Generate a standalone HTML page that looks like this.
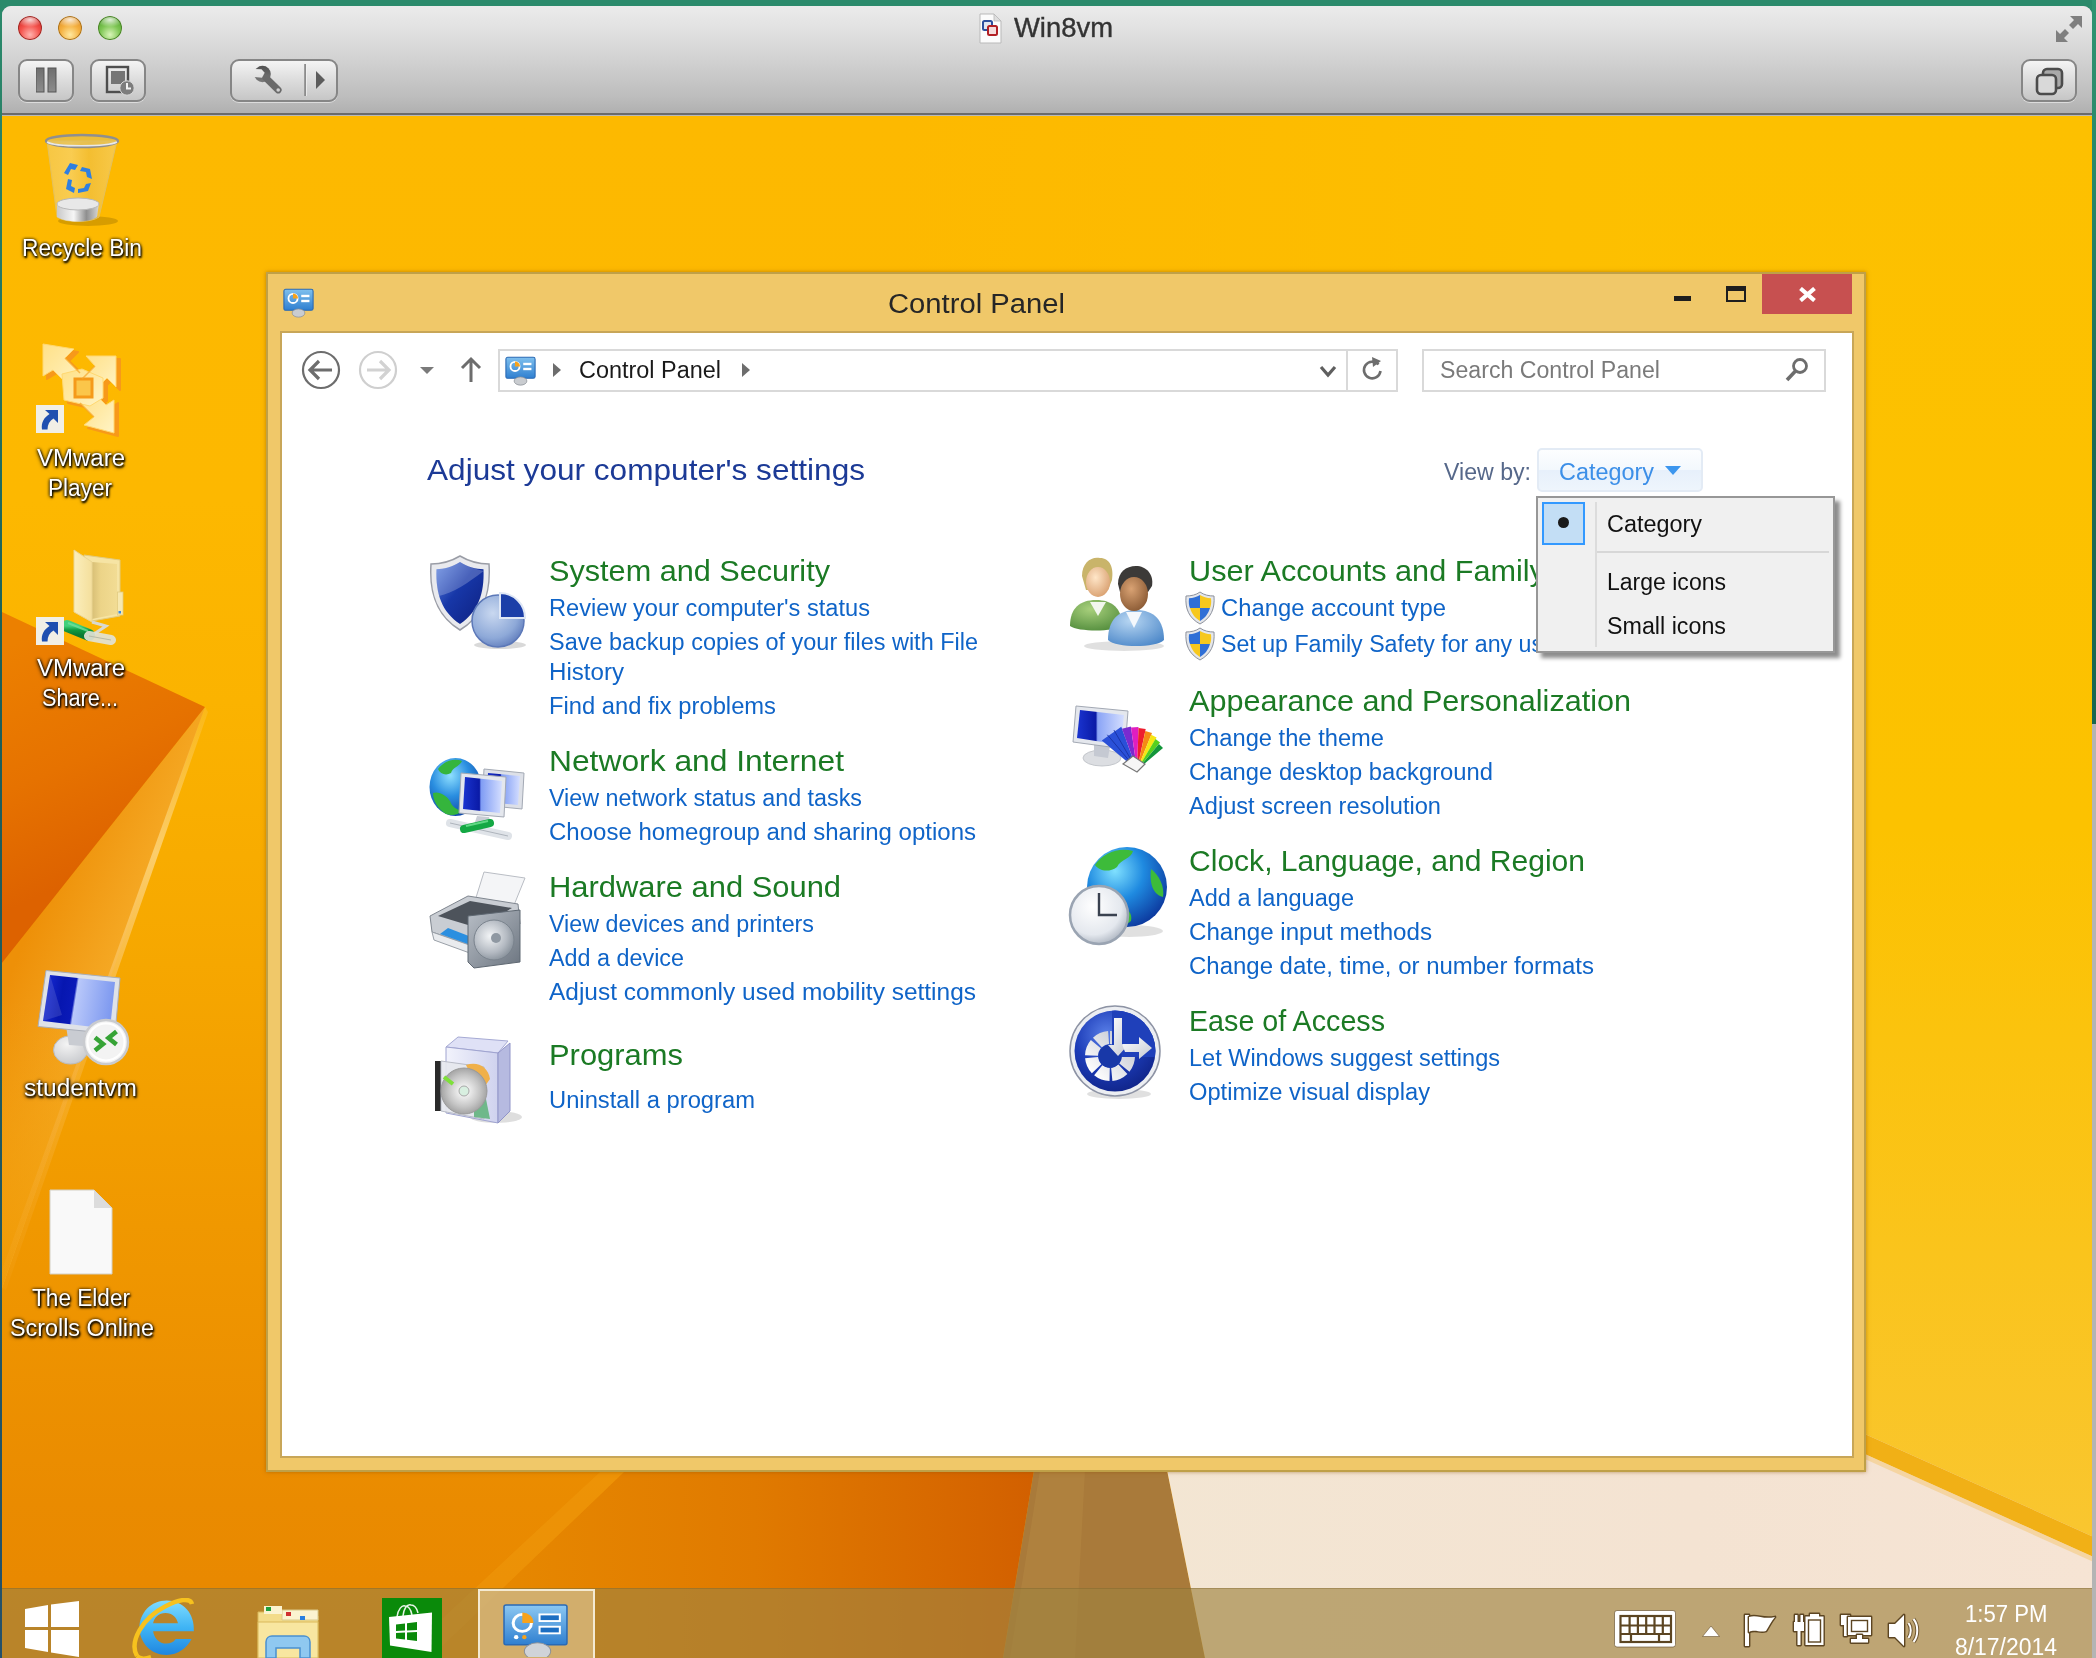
<!DOCTYPE html>
<html lang="en">
<head>
<meta charset="utf-8">
<title>Win8vm</title>
<style>
*{box-sizing:border-box;margin:0;padding:0}
html,body{width:2096px;height:1658px;overflow:hidden}
body{position:relative;background:#2b8a6b;font-family:"Liberation Sans",sans-serif;}
.abs{position:absolute}
.t{position:absolute;white-space:nowrap;transform-origin:0 50%;}
/* mac window */
#mac{position:absolute;left:2px;top:6px;width:2090px;height:1652px;border-radius:9px 9px 0 0;overflow:hidden;background:#b9b9b9}
#macbar{position:absolute;left:0;top:0;width:2090px;height:109px;background:linear-gradient(#ebebeb 0,#e2e2e2 20%,#cfcfcf 55%,#bdbdbd 85%,#b0b0b0 100%);border-bottom:2px solid #6b6b6b}
.tl{position:absolute;top:10px;width:24px;height:24px;border-radius:50%}
.mbtn{position:absolute;top:53px;height:43px;border:2px solid #868686;border-radius:9px;background:linear-gradient(#f4f4f4,#dcdcdc 50%,#c6c6c6);box-shadow:0 1px 0 rgba(255,255,255,.5)}
/* desktop */
#desk{position:absolute;left:0;top:110px;width:2090px;height:1542px;overflow:hidden;background:linear-gradient(#fdb900 0,#fdb800 25%,#fbb300 38%,#f6a700 55%,#f09800 72%,#ea8b00 90%,#e88700 100%)}
#taskbar{position:absolute;left:0;top:1472px;width:2090px;height:70px;background:rgba(159,131,64,.645);border-top:1px solid rgba(120,95,40,.35)}
/* control panel window */
#win{position:absolute;left:264px;top:156px;width:1600px;height:1200px;background:#f0c869;border:2px solid #bfa048;box-shadow:0 0 4px rgba(140,80,0,.55)}
#client{position:absolute;left:12px;top:57px;width:1574px;height:1127px;background:#fff;border:2px solid #c8a658}
#closeb{position:absolute;left:1494px;top:0;width:90px;height:40px;background:#c75050}
.box{position:absolute;border:2px solid #d9d9d9;background:#fff}
#menu{position:absolute;left:1535px;top:381px;width:299px;height:157px;background:#f0f0f0;border:2px solid #979797;box-shadow:5px 5px 4px rgba(0,0,0,.45)}
</style>
</head>
<body>
<!-- strip to the right of mac window -->
<div class="abs" style="left:2092px;top:0;width:4px;height:724px;background:linear-gradient(#2f9472 0,#2a8768 25%,#1f6a55 60%,#1c6650 100%)"></div>
<div class="abs" style="left:2092px;top:724px;width:4px;height:934px;background:#b4b4b4"></div>
<div class="abs" style="left:0;top:0;width:2px;height:1658px;background:linear-gradient(#2b8a6b,#1d5f58 40%,#24506a)"></div>

<div id="mac">
 <div id="macbar">
  <div class="tl" style="left:16px;background:radial-gradient(ellipse 55% 30% at 50% 16%,rgba(255,255,255,.8),rgba(255,255,255,0) 100%),radial-gradient(circle at 50% 78%,#ffb3ae 0,#f4524c 45%,#d8302c 75%,#a81f1c 100%);box-shadow:0 0 0 1px #9c2a25 inset"></div>
  <div class="tl" style="left:56px;background:radial-gradient(ellipse 55% 30% at 50% 16%,rgba(255,255,255,.8),rgba(255,255,255,0) 100%),radial-gradient(circle at 50% 78%,#ffe9a0 0,#f5b03f 45%,#e29428 75%,#b06c12 100%);box-shadow:0 0 0 1px #a8721d inset"></div>
  <div class="tl" style="left:96px;background:radial-gradient(ellipse 55% 30% at 50% 16%,rgba(255,255,255,.8),rgba(255,255,255,0) 100%),radial-gradient(circle at 50% 78%,#d9f5b8 0,#7ec654 45%,#5aa834 75%,#3a7d1e 100%);box-shadow:0 0 0 1px #4a8228 inset"></div>
  <div class="mbtn" style="left:16px;width:56px"><svg class="abs" style="left:16px;top:6px" width="22" height="28" viewBox="0 0 22 28"><defs><linearGradient id="pg" x1="0" y1="0" x2="0" y2="1"><stop offset="0" stop-color="#6e6e6e"/><stop offset="1" stop-color="#8c8c8c"/></linearGradient></defs><rect x="0" y="1" width="8" height="24" fill="url(#pg)" stroke="#555" stroke-width="1"/><rect x="12" y="1" width="8" height="24" fill="url(#pg)" stroke="#555" stroke-width="1"/></svg></div>
  <div class="mbtn" style="left:88px;width:56px"><svg class="abs" style="left:13px;top:4px" width="32" height="32" viewBox="0 0 32 32"><rect x="2" y="2" width="21" height="25" fill="none" stroke="#4e4e4e" stroke-width="2.4"/><rect x="6" y="6" width="14" height="13" fill="#757575"/><circle cx="22" cy="23" r="7.2" fill="#7d7d7d" stroke="#d8d8d8" stroke-width="1"/><path d="M22 18v5.5h4" fill="none" stroke="#f2f2f2" stroke-width="2"/></svg></div>
  <div class="mbtn" style="left:228px;width:108px"><svg class="abs" style="left:0;top:0" width="104" height="39" viewBox="0 0 104 39"><defs><mask id="wm" maskUnits="userSpaceOnUse" x="0" y="0" width="104" height="39"><rect width="104" height="39" fill="#fff"/><polygon points="14,7.600 29.500,8.200 32.700,11.800 30,16.800 14,15.200" fill="#000"/><circle cx="46.200" cy="29" r="1.800" fill="#000"/></mask><linearGradient id="wg" x1="0" y1="0" x2="0" y2="1"><stop offset="0" stop-color="#505050"/><stop offset="1" stop-color="#7c7c7c"/></linearGradient></defs><g mask="url(#wm)"><circle cx="30.500" cy="13" r="8.300" fill="url(#wg)"/><path d="M34 17L46.200 29" stroke="#6a6a6a" stroke-width="6.800" stroke-linecap="round"/></g><rect x="72.200" y="3" width="1.800" height="32" fill="#8c8c8c"/><rect x="74" y="3" width="1" height="32" fill="#f2f2f2" opacity=".7"/><polygon points="84,10 84,28 93,19" fill="#5c5c5c"/></svg></div>
  <div class="mbtn" style="left:2019px;width:56px"><svg class="abs" style="left:12px;top:6px" width="30" height="30" viewBox="0 0 30 30"><rect x="8" y="2" width="19" height="19" rx="4" fill="#a9a9a9" stroke="#4c4c4c" stroke-width="2.6"/><rect x="2" y="8" width="19" height="19" rx="4" fill="#d9d9d9" stroke="#4c4c4c" stroke-width="2.6"/></svg></div>
  <svg class="abs" style="left:2051px;top:7px" width="32" height="32" viewBox="0 0 32 32"><g fill="#7f7f7f"><polygon points="17,3 29,3 29,15 25,11 20,16 16,12 21,7"/><polygon points="15,29 3,29 3,17 7,21 12,16 16,20 11,25"/></g></svg>
  <svg class="abs" style="left:976px;top:7px" width="26" height="32" viewBox="0 0 26 32"><path d="M2 1h14l7 7v22H2z" fill="#fbfbfb" stroke="#b9b9b9" stroke-width="1"/><path d="M16 1v7h7z" fill="#dedede" stroke="#b9b9b9" stroke-width=".8"/><rect x="5" y="8" width="9" height="9" rx="1.5" fill="#dfe6f2" stroke="#2d4f9e" stroke-width="2"/><rect x="10" y="13" width="9" height="9" rx="1.5" fill="#f5dcdc" stroke="#b21f24" stroke-width="2"/></svg>
 </div>
 <div id="desk">
  
<svg class="abs" style="left:0;top:0" width="2090" height="1542" viewBox="2 116 2090 1542">
 <defs>
  <linearGradient id="wy" x1="0" y1="0" x2="1" y2="0"><stop offset="0" stop-color="#fdbd00" stop-opacity="0"/><stop offset=".55" stop-color="#fdbf00" stop-opacity="1"/><stop offset="1" stop-color="#fdc200"/></linearGradient>
  <linearGradient id="wy2" x1="0" y1="0" x2="0" y2="1"><stop offset="0" stop-color="#fdc000"/><stop offset=".5" stop-color="#fcc200"/><stop offset=".8" stop-color="#fac41c"/><stop offset="1" stop-color="#f9c630"/></linearGradient>
  <linearGradient id="wdo" gradientUnits="userSpaceOnUse" x1="20" y1="640" x2="120" y2="860"><stop offset="0" stop-color="#ec8000"/><stop offset=".55" stop-color="#e67200"/><stop offset="1" stop-color="#dd6200"/></linearGradient>
  <linearGradient id="whl" gradientUnits="userSpaceOnUse" x1="40" y1="900" x2="140" y2="940"><stop offset="0" stop-color="#ee9008"/><stop offset="1" stop-color="#f6ac28"/></linearGradient>
  <linearGradient id="whf" x1="0" y1="0" x2="0" y2="1"><stop offset="0" stop-color="#f19b04" stop-opacity="0"/><stop offset=".5" stop-color="#f19b04" stop-opacity="0"/><stop offset="1" stop-color="#f09a04" stop-opacity="1"/></linearGradient>
  <linearGradient id="wray" gradientUnits="userSpaceOnUse" x1="205" y1="707" x2="0" y2="1288"><stop offset="0" stop-color="#fbd070" stop-opacity=".2"/><stop offset=".25" stop-color="#fccf70" stop-opacity=".95"/><stop offset=".6" stop-color="#f9c060" stop-opacity=".4"/><stop offset="1" stop-color="#f6b040" stop-opacity=".1"/></linearGradient>
  <linearGradient id="wbo" gradientUnits="userSpaceOnUse" x1="480" y1="0" x2="1030" y2="0"><stop offset="0" stop-color="#e78900"/><stop offset=".5" stop-color="#e07a00"/><stop offset=".85" stop-color="#d76800"/><stop offset="1" stop-color="#d26000"/></linearGradient>
  <linearGradient id="wcr" x1="0" y1="0" x2="1" y2="0"><stop offset="0" stop-color="#f3e6d3"/><stop offset=".6" stop-color="#f4e3d2"/><stop offset="1" stop-color="#f6e4d4"/></linearGradient>
 </defs>
 <!-- right yellow -->
 <rect x="900" y="116" width="1200" height="1542" fill="url(#wy)"/>
 <!-- left dark orange wedge + highlight ray -->
 <polygon points="205,707 2,1288 2,963" fill="url(#whl)"/>
 <polygon points="205,707 2,1288 2,963" fill="url(#whf)"/>
 <polygon points="205,707 208,712 6,1290 2,1288 2,1270" fill="url(#wray)"/>
 <polygon points="2,612 205,707 2,963" fill="url(#wdo)"/>
 <!-- bottom: darkening orange to the right -->
 <polygon points="1011,1100 1060,1100 1034,1470 1003,1658 430,1658 624,1472" fill="url(#wbo)"/>
 <polygon points="1011,1100 624,1472 430,1658 400,1658 600,1472 990,1100" fill="#f3a010" opacity=".35"/>
 <!-- brown band -->
 <polygon points="1060,1100 1100,1100 1167,1470 1205,1658 1003,1658 1034,1470" fill="#a97a3a"/>
 <polygon points="1040,1470 1085,1470 1075,1658 1010,1658" fill="#b58a45" opacity=".45"/>
 <!-- cream floor -->
 <polygon points="1092,1100 2096,1100 2096,1658 1205,1658 1167,1470" fill="url(#wcr)"/>
 <!-- yellow block on the right -->
 <polygon points="1620,116 2096,116 2096,1538 1867,1435 1620,1324" fill="url(#wy2)"/>
 <polygon points="1620,1324 1867,1435 2096,1538 2096,1558 1867,1455 1620,1344" fill="#f1b016"/>
 <polygon points="1620,1344 1867,1455 2096,1558 2096,1563 1867,1460 1620,1349" fill="#f4c878" opacity=".55"/>
</svg>

  <svg class="abs" style="left:40px;top:17px" width="80" height="96" viewBox="0 0 80 96">
<defs><linearGradient id="rb1" x1="0" y1="0" x2="1" y2="0"><stop offset="0" stop-color="#f1d27a"/><stop offset=".35" stop-color="#f6dc92"/><stop offset=".6" stop-color="#ecc258"/><stop offset="1" stop-color="#f3d687"/></linearGradient>
<linearGradient id="rb2" x1="0" y1="0" x2="1" y2="0"><stop offset="0" stop-color="#c9c9c9"/><stop offset=".4" stop-color="#f6f6f6"/><stop offset=".7" stop-color="#8f8f8f"/><stop offset="1" stop-color="#d8d8d8"/></linearGradient></defs>
<ellipse cx="46" cy="88" rx="30" ry="5" fill="#000" opacity=".15"/>
<path d="M5 8L15 84c8 6 34 6 42 0L75 8z" fill="url(#rb1)" fill-opacity=".55" stroke="#e3c05e" stroke-width="1"/>
<path d="M15 70c8-6 34-6 42 0l-2 14c-8 6-30 6-40 0z" fill="url(#rb2)"/>
<ellipse cx="36" cy="71" rx="21" ry="6" fill="#e8e8e8" stroke="#b8b8b8"/>
<ellipse cx="40" cy="8" rx="36" ry="6" fill="#e0c060" fill-opacity=".6" stroke="#8f8f8f" stroke-width="2.4"/><path d="M5 9c8 5 60 5 70 0" fill="none" stroke="#e9e9e9" stroke-width="1.5"/>
<g fill="#2f7fe0"><path d="M22 40l6-10 8 2-3 5-4-1-3 6z"/><path d="M40 34l8 2 2 10-5-2-1-5-6-1z"/><path d="M26 46l-2 10 8 4 1-5-4-2 1-6z"/><path d="M36 60l10-2 3-8-5 1-2 4-6 1z"/></g>
</svg><svg class="abs" style="left:36px;top:222px" width="92" height="100" viewBox="0 0 92 100">
<defs><linearGradient id="vp1" x1="0" y1="0" x2="1" y2="1"><stop offset="0" stop-color="#ffe188"/><stop offset=".5" stop-color="#ffe9a4"/><stop offset="1" stop-color="#fff4c6"/></linearGradient></defs>
<g fill="#f7991a" stroke="#f7991a" stroke-width="2" stroke-linejoin="round" transform="translate(4,3)"><polygon points="5,6 36,11 27,20 42,35 30,47 15,32 5,38"/><polygon points="78,18 78,49 69,40 56,53 44,41 57,28 48,18"/><polygon points="76,95 46,87 56,79 42,65 54,53 68,67 76,62"/><polygon points="24,36 44,31 65,40 65,60 52,68 26,62"/></g>
<g fill="url(#vp1)" stroke="#ffd870" stroke-width="1" stroke-linejoin="round"><polygon points="5,6 36,11 27,20 42,35 30,47 15,32 5,38"/><polygon points="78,18 78,49 69,40 56,53 44,41 57,28 48,18"/><polygon points="76,95 46,87 56,79 42,65 54,53 68,67 76,62"/><polygon points="24,36 44,31 65,40 65,60 52,68 26,62"/></g>
<rect x="37" y="41" width="17" height="18" fill="#fbc64a" stroke="#f59a1a" stroke-width="3"/>
<path d="M27 20l15 15M57 28L44 41M56 79L42 65" stroke="#f6a52a" stroke-width="1.5" opacity=".7"/>
</svg><svg class="abs" style="left:34px;top:289px" width="28" height="28" viewBox="0 0 28 28"><rect x="0" y="0" width="28" height="28" fill="#f1efe6"/><path d="M9 5h13v13l-4.500-4.500c-4 2.500-6 6-6 11h-5.500c-1-7 2-12 7.500-15.500z" fill="#1f4fb0"/></svg><svg class="abs" style="left:54px;top:432px" width="72" height="100" viewBox="0 0 72 100">
<defs><linearGradient id="vs1" x1="0" y1="0" x2="1" y2="0"><stop offset="0" stop-color="#d8bf76"/><stop offset=".35" stop-color="#ecd488"/><stop offset="1" stop-color="#f2dc94"/></linearGradient>
<linearGradient id="vs2" x1="0" y1="0" x2="1" y2="0"><stop offset="0" stop-color="#fbeebc"/><stop offset="1" stop-color="#f4df9c"/></linearGradient>
<linearGradient id="vs3" x1="0" y1="0" x2="0" y2="1"><stop offset="0" stop-color="#3fd07a"/><stop offset=".45" stop-color="#0f9a40"/><stop offset="1" stop-color="#0a7a32"/></linearGradient></defs>
<polygon points="28,7 64,12 64,68 36,73" fill="#f6e4a4" stroke="#e2cb80"/>
<polygon points="36,14 61,16 61,66 36,71" fill="url(#vs1)"/>
<rect x="61.500" y="44" width="5.500" height="23" fill="#f7e8b0" stroke="#e2cb80" stroke-width=".8"/><rect x="62.500" y="63" width="2.500" height="2.500" fill="#3a8ae0"/>
<polygon points="18,2 36,14 36,74 18,64" fill="url(#vs2)" stroke="#ead594"/>
<path d="M36 74l14 4-12 8" fill="none" stroke="#d9d9d0" stroke-width="3"/>
<path d="M11 78l22 9" stroke="url(#vs3)" stroke-width="12" stroke-linecap="round"/><path d="M12 75l20 8" stroke="#6fe09c" stroke-width="2" opacity=".8"/>
<path d="M33 88l22 4" stroke="#e2e3d6" stroke-width="10" stroke-linecap="round" opacity=".92"/><path d="M33 88l22 4" stroke="#b9bba8" stroke-width="1"/>
</svg><svg class="abs" style="left:34px;top:501px" width="28" height="28" viewBox="0 0 28 28"><rect x="0" y="0" width="28" height="28" fill="#f1efe6"/><path d="M9 5h13v13l-4.500-4.500c-4 2.500-6 6-6 11h-5.500c-1-7 2-12 7.500-15.500z" fill="#1f4fb0"/></svg><svg class="abs" style="left:34px;top:854px" width="96" height="100" viewBox="0 0 96 100">
<defs><linearGradient id="sv1" x1="0" y1="0" x2="1" y2=".12"><stop offset="0" stop-color="#1a2ed8"/><stop offset=".3" stop-color="#0616b0"/><stop offset=".47" stop-color="#0a1ab8"/><stop offset=".5" stop-color="#b9c8fa"/><stop offset="1" stop-color="#7f9af0"/></linearGradient>
<radialGradient id="sv2" cx=".4" cy=".3" r=".8"><stop offset="0" stop-color="#f4f4f4"/><stop offset="1" stop-color="#c4c6ca"/></radialGradient></defs>
<ellipse cx="34.500" cy="80" rx="17" ry="14" fill="url(#sv2)" stroke="#b9bcc2"/>
<polygon points="30,56 50,58 47,76 33,75" fill="#c9ccd2"/>
<polygon points="10,0.500 84,8 79,64 2,56.500" fill="#dfe2e8" stroke="#a9aeb8"/>
<polygon points="14,5 79,12 74,59 7,51" fill="url(#sv1)"/>
<path d="M14 5l12 40-19 6z" fill="#fff" opacity=".12"/>
<circle cx="70" cy="72" r="22" fill="#f3f3f3" stroke="#c9cbcf" stroke-width="2.500"/>
<circle cx="70" cy="72" r="18.500" fill="none" stroke="#fff" stroke-width="2"/>
<g fill="none" stroke="#36a336" stroke-width="4.600"><path d="M59 67.500l8 6.500-8 6.500"/><path d="M80.500 61.500l-8 6.500 8 6.500"/></g>
</svg><svg class="abs" style="left:45px;top:1071px" width="70" height="90" viewBox="0 0 70 90"><path d="M3 3h44l18 18v66H3z" fill="#f9f9f9" stroke="#d4d0c4" stroke-width="1"/><path d="M47 3v18h18z" fill="#dcdcdc"/></svg>
  <div id="win">
   <svg class="abs" style="left:15px;top:14px" width="31" height="30" viewBox="0 0 34 32"><defs><linearGradient id="cps0" x1="0" y1="0" x2="0" y2="1"><stop offset="0" stop-color="#7fc0ee"/><stop offset="1" stop-color="#2f7fd0"/></linearGradient></defs><rect x="1" y="1" width="32" height="23" rx="2" fill="url(#cps0)" stroke="#2a6ab5" stroke-width="1.2"/><circle cx="11" cy="11" r="5" fill="none" stroke="#fff" stroke-width="2"/><path d="M11 11V5.5A5.5 5.5 0 0 1 16.5 11z" fill="#f7a21b"/><rect x="20" y="7" width="9" height="2.6" fill="#fff"/><rect x="20" y="12.5" width="9" height="2.6" fill="#fff"/><ellipse cx="17" cy="27" rx="7" ry="4.5" fill="#c9ccd0" stroke="#8a8f96" stroke-width=".8"/></svg>
   <div id="closeb"><svg class="abs" style="left:37px;top:13px" width="17" height="15" viewBox="0 0 17 15"><path d="M1.5 1.5l14 12M15.5 1.5l-14 12" stroke="#fff" stroke-width="4.2"/></svg></div>
   <div class="abs" style="left:1406px;top:22px;width:17px;height:5px;background:#1e1e1e"></div><div class="abs" style="left:1458px;top:12px;width:20px;height:16px;border:2px solid #1e1e1e;border-top-width:5px"></div>
   <div id="client">
    <svg class="abs" style="left:18px;top:15px" width="190" height="44" viewBox="300 348 190 44"><circle cx="321" cy="370" r="18" fill="#fff" stroke="#6d6d6d" stroke-width="2.2"/><path d="M332 370h-21M319 361l-9 9 9 9" fill="none" stroke="#6d6d6d" stroke-width="3.2"/><circle cx="378" cy="370" r="18" fill="#fff" stroke="#cfcfcf" stroke-width="2.2"/><path d="M367 370h21M380 361l9 9-9 9" fill="none" stroke="#d2d2d2" stroke-width="3.2"/><polygon points="420,367 434,367 427,374" fill="#7a7a7a"/><path d="M471 382v-22M462 368l9-9 9 9" fill="none" stroke="#6d6d6d" stroke-width="3"/></svg><div class="box" style="left:216px;top:16px;width:900px;height:43px"></div><div class="abs" style="left:1064px;top:18px;width:2px;height:39px;background:#d9d9d9"></div><div class="box" style="left:1140px;top:16px;width:404px;height:43px"></div><svg class="abs" style="left:223px;top:23px" width="31" height="30" viewBox="0 0 34 32"><defs><linearGradient id="cps1" x1="0" y1="0" x2="0" y2="1"><stop offset="0" stop-color="#7fc0ee"/><stop offset="1" stop-color="#2f7fd0"/></linearGradient></defs><rect x="1" y="1" width="32" height="23" rx="2" fill="url(#cps1)" stroke="#2a6ab5" stroke-width="1.2"/><circle cx="11" cy="11" r="5" fill="none" stroke="#fff" stroke-width="2"/><path d="M11 11V5.5A5.5 5.5 0 0 1 16.5 11z" fill="#f7a21b"/><rect x="20" y="7" width="9" height="2.6" fill="#fff"/><rect x="20" y="12.5" width="9" height="2.6" fill="#fff"/><ellipse cx="17" cy="27" rx="7" ry="4.5" fill="#c9ccd0" stroke="#8a8f96" stroke-width=".8"/></svg><svg class="abs" style="left:270px;top:29px" width="12" height="16"><polygon points="1,1 1,15 9,8" fill="#6d6d6d"/></svg><svg class="abs" style="left:459px;top:29px" width="12" height="16"><polygon points="1,1 1,15 9,8" fill="#6d6d6d"/></svg><svg class="abs" style="left:1037px;top:32px" width="18" height="14"><path d="M2 2l7 8 7-8" fill="none" stroke="#5f5f5f" stroke-width="3.2"/></svg><svg class="abs" style="left:1078px;top:23px" width="24" height="26" viewBox="0 0 24 26"><path d="M18.5 8.5A8.3 8.3 0 1 0 20.5 15" fill="none" stroke="#6d6d6d" stroke-width="2.6"/><polygon points="12,1 21,5 13,11" fill="#6d6d6d"/></svg><svg class="abs" style="left:1502px;top:24px" width="26" height="26" viewBox="0 0 26 26"><circle cx="16" cy="9" r="6.5" fill="none" stroke="#6d6d6d" stroke-width="2.8"/><path d="M11.5 14L3 23" stroke="#6d6d6d" stroke-width="3.6"/></svg><div class="abs" style="left:1255px;top:115px;width:166px;height:44px;border:2px solid #e3ebf5;border-radius:5px;background:linear-gradient(#fdfeff 0,#f3f8fd 50%,#e7f0fb 51%,#eef5fc 100%)"></div><svg class="abs" style="left:1382px;top:132px" width="18" height="12"><polygon points="1,1 17,1 9,10" fill="#3c96ee"/></svg>
    <svg class="abs" style="left:146px;top:220px" width="100" height="100" viewBox="0 0 100 100">
<defs><linearGradient id="sh1" x1="0" y1="0" x2="1" y2="1"><stop offset="0" stop-color="#5f86e0"/><stop offset=".45" stop-color="#1737a8"/><stop offset="1" stop-color="#0e2080"/></linearGradient>
<radialGradient id="sh2" cx=".4" cy=".35" r=".8"><stop offset="0" stop-color="#c9d8f0"/><stop offset=".6" stop-color="#8ea9d8"/><stop offset="1" stop-color="#4c69b0"/></radialGradient></defs>
<ellipse cx="72" cy="92" rx="26" ry="4" fill="#000" opacity=".15"/>
<path d="M32 3C22 9 12 11 3 11c-2 30 6 52 29 66 23-14 31-36 29-66C52 11 42 9 32 3z" fill="#e9eaee" stroke="#9a9da6" stroke-width="1.5"/>
<path d="M32 9C24 14 16 16 8.5 16.3 7.5 41 14 59 32 71 50 59 56.500 41 55.500 16.300 48 16 40 14 32 9z" fill="url(#sh1)"/>
<path d="M32 9C24 14 16 16 8.500 16.300 8 28 9 36 11 43 25 40 40 30 55.600 18 48 16 40 14 32 9z" fill="#fff" opacity=".22"/>
<circle cx="70" cy="68" r="26" fill="url(#sh2)" stroke="#5c78b8" stroke-width="1.5"/>
<path d="M70 68V43A25 25 0 0 1 95 68z" fill="#1c3fa8" stroke="#dfe7f5" stroke-width="2" transform="translate(2,-3)"/>
</svg><svg class="abs" style="left:146px;top:422px" width="100" height="96" viewBox="0 0 100 96">
<defs><radialGradient id="gl1" cx=".4" cy=".3" r=".8"><stop offset="0" stop-color="#8fe0ff"/><stop offset=".45" stop-color="#2a8ee0"/><stop offset="1" stop-color="#0b3a9a"/></radialGradient>
<linearGradient id="mn1" x1="0" y1="0" x2="1" y2="0"><stop offset="0" stop-color="#1a34d0"/><stop offset=".42" stop-color="#0a1aa6"/><stop offset=".46" stop-color="#7f9cf4"/><stop offset="1" stop-color="#d4deff"/></linearGradient></defs>
<ellipse cx="27.500" cy="32" rx="26" ry="29" fill="url(#gl1)"/>
<path d="M10 14c6-8 16-11 24-8-3 6-9 6-11 12-5 3-11 1-13-4zM5 38c6-2 13 2 17 8 2 6 6 8 12 10-4 4-10 5-16 3C10 54 5 46 5 38z" fill="#35b53c"/>
<g transform="translate(52,14)"><polygon points="4,0 44,4 42,40 2,36" fill="#dde0e7" stroke="#a3a9b4"/><polygon points="8,4 40,7 38,36 6,33" fill="url(#mn1)"/></g>
<g transform="translate(29,18)"><polygon points="4,0 49,4 47,44 2,40" fill="#e4e7ed" stroke="#a3a9b4"/><polygon points="8,4 45,8 43,40 6,36" fill="url(#mn1)"/><polygon points="20,43 32,44 34,50 18,49" fill="#c9cdd5"/></g>
<path d="M22 68l58 13" stroke="#dfe3e8" stroke-width="8" stroke-linecap="round"/><path d="M22 68l58 13" stroke="#aeb4bc" stroke-width="1"/>
<path d="M36 74l26-6" stroke="#14a844" stroke-width="8" stroke-linecap="round"/><path d="M38 71l22-5" stroke="#5fd884" stroke-width="2"/>
</svg><svg class="abs" style="left:146px;top:537px" width="100" height="100" viewBox="0 0 100 100">
<defs><linearGradient id="hw1" x1="0" y1="0" x2="1" y2="1"><stop offset="0" stop-color="#b8bec6"/><stop offset="1" stop-color="#6c7580"/></linearGradient>
<radialGradient id="hw2" cx=".4" cy=".4" r=".7"><stop offset="0" stop-color="#f2f4f6"/><stop offset=".6" stop-color="#b4bac2"/><stop offset="1" stop-color="#7d8791"/></radialGradient></defs>
<polygon points="56,2 97,8 84,40 46,34" fill="#f4f5f7" stroke="#b9bdc4"/>
<polygon points="2,46 40,26 90,34 92,54 50,78 4,62" fill="#c9cdd3" stroke="#7f868f"/>
<polygon points="10,46 42,31 84,38 50,58" fill="#4d535b"/>
<polygon points="4,62 50,78 50,86 6,70" fill="#e9ebee" stroke="#9aa0a8"/>
<polygon points="12,64 40,74 46,68 20,58" fill="#2b8fe0"/>
<polygon points="40,46 92,40 92,92 46,98 40,92" fill="url(#hw1)" stroke="#5f6872"/>
<circle cx="66" cy="70" r="20" fill="url(#hw2)" stroke="#7a838d"/><circle cx="68" cy="68" r="5" fill="#8f98a2"/>
</svg><svg class="abs" style="left:152px;top:700px" width="90" height="96" viewBox="0 0 90 96">
<defs><linearGradient id="pr1" x1="0" y1="0" x2="1" y2="0"><stop offset="0" stop-color="#f2f3fc"/><stop offset="1" stop-color="#cfd2ee"/></linearGradient>
<radialGradient id="pr2" cx=".5" cy=".5" r=".5"><stop offset="0" stop-color="#fff"/><stop offset=".25" stop-color="#ececec"/><stop offset=".7" stop-color="#c4c4c4"/><stop offset="1" stop-color="#a4a4a4"/></radialGradient></defs>
<ellipse cx="62" cy="84" rx="26" ry="6" fill="#000" opacity=".13"/>
<polygon points="24,4 74,8 64,20 12,14" fill="#dfe1f6" stroke="#a6aad4"/>
<polygon points="12,14 64,20 64,90 12,80" fill="url(#pr1)" stroke="#a0a4d0"/>
<polygon points="64,20 76,10 76,78 64,90" fill="#b6bae0" stroke="#9094c8"/>
<polygon points="1,28 7,28 7,78 1,78" fill="#2a2a2a"/>
<polygon points="7,28 50,34 50,86 7,78" fill="#e6e8ee" opacity=".92" stroke="#b3b7c2"/>
<path d="M32 32c12-4 22 2 24 14l-10 14z" fill="#f0b04a"/>
<path d="M40 70l12-4 4 20-16-2z" fill="#6fb88a"/>
<circle cx="30" cy="58" r="23" fill="url(#pr2)" stroke="#9a9a9a"/><circle cx="30" cy="58" r="5" fill="#d8efe0" stroke="#a8a8a8"/>
<path d="M10 44l9 7" stroke="#7ee03a" stroke-width="4"/>
</svg><svg class="abs" style="left:786px;top:223px" width="100" height="96" viewBox="0 0 100 96">
<defs><radialGradient id="us1" cx=".4" cy=".3" r=".8"><stop offset="0" stop-color="#a8d07c"/><stop offset="1" stop-color="#4f8a3a"/></radialGradient>
<radialGradient id="us2" cx=".4" cy=".3" r=".8"><stop offset="0" stop-color="#b7d6f2"/><stop offset="1" stop-color="#4a86c8"/></radialGradient>
<radialGradient id="us3" cx=".4" cy=".35" r=".7"><stop offset="0" stop-color="#ffe6c8"/><stop offset="1" stop-color="#d9a070"/></radialGradient>
<radialGradient id="us4" cx=".4" cy=".35" r=".7"><stop offset="0" stop-color="#d9a273"/><stop offset="1" stop-color="#8a5a34"/></radialGradient></defs>
<ellipse cx="56" cy="90" rx="40" ry="5" fill="#000" opacity=".12"/>
<path d="M2 70c0-18 10-26 26-26s26 8 26 26c-8 6-44 6-52 0z" fill="url(#us1)"/>
<path d="M14 20C14 6 24 0 32 2c10 0 14 10 12 22l-4 10H18z" fill="#c9b46a"/>
<ellipse cx="30" cy="26" rx="12" ry="15" fill="url(#us3)"/>
<path d="M22 46l8 14 8-14z" fill="#f2f6ee"/>
<path d="M40 84c0-20 10-30 28-30s28 10 28 30c-8 8-48 8-56 0z" fill="url(#us2)"/>
<path d="M50 28c0-12 8-18 18-18s18 8 16 20l-4 6H52z" fill="#3c3a38"/>
<ellipse cx="66" cy="38" rx="14" ry="17" fill="url(#us4)"/>
<path d="M58 56l8 16 8-16z" fill="#f4f8fc"/>
</svg><svg class="abs" style="left:788px;top:369px" width="94" height="80" viewBox="0 0 94 80">
<defs><linearGradient id="ap1" x1="0" y1="0" x2="1" y2="0"><stop offset="0" stop-color="#1a34d0"/><stop offset=".4" stop-color="#0a1aa6"/><stop offset=".44" stop-color="#8aa4f6"/><stop offset="1" stop-color="#d4deff"/></linearGradient></defs>
<ellipse cx="32" cy="56" rx="19" ry="8" fill="#dcdee2" stroke="#c4c7cc"/>
<polygon points="24,42 40,44 38,56 24,54" fill="#c5c9d2"/>
<polygon points="6,4 58,9 55,47 3,40" fill="#e4e7ed" stroke="#a3a9b4"/>
<polygon points="10,8 54,13 51,43 7,36" fill="url(#ap1)"/>
<g transform="translate(67,68)"><polygon points="0,0 -35.2,-29.6 -15.7,-43.2" fill="#2a50d8"/><polygon points="0,0 -15.0,-41.3 -6.1,-43.6" fill="#7a2ad0"/><polygon points="0,0 -6.0,-42.6 1.5,-43.0" fill="#e01ec0"/><polygon points="0,0 1.5,-42.0 8.7,-41.1" fill="#ee1e2e"/><polygon points="0,0 8.3,-39.1 15.0,-37.1" fill="#f58a14"/><polygon points="0,0 14.2,-35.2 19.6,-32.6" fill="#f6e614"/><polygon points="0,0 18.5,-30.9 23.1,-27.6" fill="#56d01e"/><polygon points="0,0 21.9,-26.0 26.0,-21.9" fill="#12963a"/><path d="M0 0L-29.6 -35.2M0 0L-23.0 -39.8" stroke="#1a34a8" stroke-width="1"/>
<polygon points="0,2 -14,-6 -4,-14 8,-6" fill="#f6f6f6" stroke="#777" stroke-width="1.2"/>
</g>
</svg><svg class="abs" style="left:785px;top:512px" width="102" height="102" viewBox="0 0 102 102">
<defs><radialGradient id="ck1" cx=".35" cy=".3" r=".8"><stop offset="0" stop-color="#7fe0ff"/><stop offset=".45" stop-color="#1f8ae0"/><stop offset="1" stop-color="#0a2f96"/></radialGradient>
<radialGradient id="ck2" cx=".4" cy=".35" r=".7"><stop offset="0" stop-color="#ffffff"/><stop offset=".7" stop-color="#e4e8ee"/><stop offset="1" stop-color="#aab2be"/></radialGradient></defs>
<ellipse cx="62" cy="86" rx="34" ry="6" fill="#000" opacity=".12"/>
<circle cx="60" cy="42" r="40" fill="url(#ck1)"/>
<path d="M28 20c8-12 24-18 38-14-2 8-12 8-16 16-8 6-18 4-22-2zM84 24c8 6 14 18 12 28-8-2-14-10-12-28zM52 62c8 0 14 6 12 14-4 4-12 6-18 4-2-8 0-14 6-18z" fill="#3dbb3a"/>
<circle cx="32" cy="70" r="29" fill="url(#ck2)" stroke="#9aa4b2" stroke-width="2.5"/>
<path d="M32 48v22h18" fill="none" stroke="#3a4250" stroke-width="2.4"/>
</svg><svg class="abs" style="left:785px;top:671px" width="96" height="96" viewBox="0 0 96 96">
<defs><radialGradient id="ea1" cx=".4" cy=".3" r=".8"><stop offset="0" stop-color="#5a80e8"/><stop offset=".5" stop-color="#1c3cb8"/><stop offset="1" stop-color="#0e2080"/></radialGradient>
<linearGradient id="ea2" x1="0" y1="0" x2="1" y2="1"><stop offset="0" stop-color="#ffffff"/><stop offset="1" stop-color="#c4c8d2"/></linearGradient></defs>
<ellipse cx="52" cy="90" rx="32" ry="5" fill="#000" opacity=".12"/>
<circle cx="48" cy="47" r="45" fill="#eceef2" stroke="#8d93a4" stroke-width="1.5"/>
<circle cx="48" cy="47" r="40.500" fill="url(#ea1)"/>
<circle cx="43" cy="52" r="18.500" fill="none" stroke="url(#ea2)" stroke-width="13" stroke-dasharray="12.300 2.230" transform="rotate(-90 43 52)"/>
<clipPath id="eac"><circle cx="48" cy="47" r="40.500"/></clipPath><path d="M45 4h46v49H45z" fill="#1f40ba" clip-path="url(#eac)"/>
<circle cx="43" cy="52" r="11.500" fill="#1838a8"/>
<path d="M47 14h8v27h6L51 52 41 41h6z" fill="url(#ea2)"/>
<path d="M55 40h17v-7l13 11-13 11v-7H58z" fill="url(#ea2)"/>
</svg><svg class="abs" style="left:903px;top:258px" width="30" height="34" viewBox="0 0 30 34"><path d="M15 1C11 4 6 5 1 5c-1 13 3 22 14 28C26 27 30 18 29 5 24 5 19 4 15 1z" fill="#e4e6ea" stroke="#8c919c"/><path d="M15 4C12 6 8 7 4 7.300 3.500 12 4 15 5 17H15z" fill="#2f6fd6"/><path d="M15 4c3 2 7 3 11 3.300C26.500 12 26 15 25 17H15z" fill="#f7c81e"/><path d="M5 17c2 6 5 10 10 13V17z" fill="#f7c81e"/><path d="M25 17c-2 6-5 10-10 13V17z" fill="#2f6fd6"/></svg><svg class="abs" style="left:903px;top:294px" width="30" height="34" viewBox="0 0 30 34"><path d="M15 1C11 4 6 5 1 5c-1 13 3 22 14 28C26 27 30 18 29 5 24 5 19 4 15 1z" fill="#e4e6ea" stroke="#8c919c"/><path d="M15 4C12 6 8 7 4 7.300 3.500 12 4 15 5 17H15z" fill="#2f6fd6"/><path d="M15 4c3 2 7 3 11 3.300C26.500 12 26 15 25 17H15z" fill="#f7c81e"/><path d="M5 17c2 6 5 10 10 13V17z" fill="#f7c81e"/><path d="M25 17c-2 6-5 10-10 13V17z" fill="#2f6fd6"/></svg>
   </div>
  </div>
  <div id="taskbar"><svg class="abs" style="left:23px;top:12px" width="54" height="56" viewBox="0 0 54 56"><g fill="#fff"><polygon points="0,8 23,4 23,26 0,26"/><polygon points="26,3.5 54,0 54,26 26,26"/><polygon points="0,29 23,29 23,51 0,47"/><polygon points="26,29 54,29 54,56 26,51.500"/></g></svg><svg class="abs" style="left:130px;top:9px" width="66" height="62" viewBox="0 0 66 62">
<defs><linearGradient id="ie1" x1="0" y1="0" x2="0" y2="1"><stop offset="0" stop-color="#7fdcff"/><stop offset=".5" stop-color="#3fb4f4"/><stop offset="1" stop-color="#1f86e0"/></linearGradient></defs>
<path transform="translate(-3.800,-6.600) scale(1.131,1.135)" d="M34 8C20 8 10 19 10 32s10 24 24 24c10 0 18-6 22-14H42c-2 3-5 4-8 4-7 0-11-5-12-11h36c1-15-9-27-24-27zm-12 20c1-5 5-9 11-9s10 4 11 9z" fill="url(#ie1)"/>
<path d="M5 58C-3 44 10 20 34 8 46 2 58 -1 60 6" fill="none" stroke="#f7c21e" stroke-width="4.500"/>
<path d="M5 58c3 3 8 3 14 1" fill="none" stroke="#f7c21e" stroke-width="4"/>
</svg><svg class="abs" style="left:254px;top:13px" width="64" height="56" viewBox="0 0 64 56">
<path d="M2 10h22l4 4h34v42H2z" fill="#f3dc8a" stroke="#d9b85a"/>
<path d="M26 8h36v10H26z" fill="#fbf3d0" stroke="#d9c98a"/><rect x="8" y="4" width="18" height="8" fill="#fbf3d0"/>
<rect x="10" y="5" width="5" height="4" fill="#20a040"/><rect x="30" y="10" width="5" height="4" fill="#d03030"/><rect x="44" y="14" width="5" height="4" fill="#2a7fe0"/>
<path d="M2 20h60v36H2z" fill="#f8e6a0" stroke="#d9b85a"/>
<path d="M10 56V40c0-4 3-6 6-6h32c3 0 6 2 6 6v16h-10V46H20v10z" fill="#8fc8f0" stroke="#4a90d0" stroke-width="1.5"/>
</svg><svg class="abs" style="left:380px;top:9px" width="60" height="60" viewBox="0 0 60 60"><rect width="60" height="60" fill="#0a8a0a"/><g fill="none" stroke="#e9f5e9" stroke-width="1.500"><path d="M15 19c1-8 5-12 8-11 4 0 6 4 7 9"/><path d="M21 18c1-8 4-12 8-11 4 0 6 4 7 8"/></g><polygon points="7,19 50,14.500 49.500,54 8,47.500" fill="#fff"/><g fill="#0a8a0a"><polygon points="14,26.500 23,25.500 23,32.500 14,33"/><polygon points="25,25.200 35,24 35,32 25,32.400"/><polygon points="14,35 23,34.600 23,41.500 14,40.500"/><polygon points="25,34.500 35,34 35,43 25,41.800"/></g></svg><div class="abs" style="left:476px;top:0px;width:117px;height:70px;background:rgba(226,200,150,.62);border:2px solid #f4ead2;border-bottom:none"></div><svg class="abs" style="left:501px;top:15px" width="67" height="53" viewBox="0 0 66 56" preserveAspectRatio="none">
<defs><linearGradient id="cpb" x1="0" y1="0" x2="0" y2="1"><stop offset="0" stop-color="#8cc8f2"/><stop offset="1" stop-color="#2f7fd0"/></linearGradient></defs>
<rect x="1" y="1" width="62" height="42" rx="2" fill="url(#cpb)" stroke="#2a6ab5" stroke-width="1.5"/>
<circle cx="19" cy="20" r="9" fill="none" stroke="#fff" stroke-width="3"/><path d="M19 20V9A11 11 0 0 1 30 20z" fill="#f7a21b"/>
<rect x="36" y="11" width="20" height="7" fill="#1c6ec2" stroke="#fff" stroke-width="2"/><rect x="36" y="24" width="20" height="7" fill="#1c6ec2" stroke="#fff" stroke-width="2"/>
<circle cx="13" cy="35" r="2.2" fill="#fff"/><circle cx="21" cy="35" r="2.2" fill="#f7a21b"/>
<ellipse cx="34" cy="50" rx="13" ry="9" fill="#d0d3d8" stroke="#8a8f96"/>
</svg><svg class="abs" style="left:1608px;top:17px" width="320" height="44" viewBox="1610 1606 320 44">
<rect x="1614.500" y="1610.500" width="61" height="36.500" rx="2.500" fill="#fff" stroke="#5c4522" stroke-width="1" stroke-opacity=".6"/>
<g fill="none" stroke="#5c4522" stroke-width="2.200"><rect x="1620.500" y="1616" width="50.500" height="26"/><path d="M1620 1625.500h51M1620 1634h51M1629.6 1616v18M1637.9 1616v18M1646.2 1616v18M1654.5 1616v18M1662.8 1616v18M1631 1634v8M1659 1634v8"/></g>
<polygon points="1702.500,1636.500 1719.500,1636.500 1711,1626" fill="#fff" stroke="#5c4522" stroke-width="1" stroke-opacity=".55"/>
<g fill="#fff" stroke="#5c4522" stroke-width="2.800" stroke-linejoin="round" paint-order="stroke">
<rect x="1745" y="1615" width="4" height="31"/><path d="M1749 1617c8-3 14 3 26 0-4 5-6 9-9 14-6 2-11-2-17 1z"/>
<path d="M1795 1615h2.500v7h3v-7h2.500v7h1v9h-3.500v14h-3v-14h-3.500v-9h1z"/>
<path d="M1810 1614h9v2.500h4.500v28.500h-18v-28.500h4.500z"/>
<path d="M1841 1615h9v10h-3v11h-3v-11h-3z"/><path d="M1848 1617h23v18h-23z"/><path d="M1857 1635h5v4h6v3.500h-17v-3.500h6z"/>
<path d="M1889 1624h6l9-9v31l-9-9h-6z"/>
</g>
<rect x="1808.500" y="1620" width="12" height="22" fill="#fff" stroke="#5c4522" stroke-width="1.400"/>
<rect x="1851.500" y="1620.500" width="16" height="11" fill="#fff" stroke="#5c4522" stroke-width="1.400"/>
<g fill="none" stroke="#5c4522" stroke-width="4" stroke-opacity=".8"><path d="M1908.500 1623c3 4 3 11 0 15M1913.500 1619c5 6 5 17 0 23"/></g>
<g fill="none" stroke="#fff" stroke-width="2"><path d="M1908.500 1623c3 4 3 11 0 15M1913.500 1619c5 6 5 17 0 23"/></g>
</svg></div>
 </div>
</div>
<div class="t" style="left:1014px;top:15.1px;font-size:27px;line-height:27px;color:#333;transform:scaleX(1.0152);text-shadow:0 1px 0 rgba(255,255,255,.6);-webkit-text-stroke:.4px #333">Win8vm</div>
<div class="t" style="left:22px;top:236.5px;font-size:23px;line-height:23px;color:#fff;transform:scaleX(0.9882);text-shadow:1px 2px 2px rgba(0,0,0,.95),0 0 3px rgba(0,0,0,.9),0 1px 4px rgba(0,0,0,.8)">Recycle Bin</div>
<div class="t" style="left:37px;top:446.5px;font-size:23px;line-height:23px;color:#fff;transform:scaleX(1.0432);text-shadow:1px 2px 2px rgba(0,0,0,.95),0 0 3px rgba(0,0,0,.9),0 1px 4px rgba(0,0,0,.8)">VMware</div>
<div class="t" style="left:48px;top:476.5px;font-size:23px;line-height:23px;color:#fff;transform:scaleX(0.9815);text-shadow:1px 2px 2px rgba(0,0,0,.95),0 0 3px rgba(0,0,0,.9),0 1px 4px rgba(0,0,0,.8)">Player</div>
<div class="t" style="left:37px;top:656.5px;font-size:23px;line-height:23px;color:#fff;transform:scaleX(1.0432);text-shadow:1px 2px 2px rgba(0,0,0,.95),0 0 3px rgba(0,0,0,.9),0 1px 4px rgba(0,0,0,.8)">VMware</div>
<div class="t" style="left:42px;top:686.5px;font-size:23px;line-height:23px;color:#fff;transform:scaleX(0.9435);text-shadow:1px 2px 2px rgba(0,0,0,.95),0 0 3px rgba(0,0,0,.9),0 1px 4px rgba(0,0,0,.8)">Share...</div>
<div class="t" style="left:24px;top:1076.5px;font-size:23px;line-height:23px;color:#fff;transform:scaleX(1.0649);text-shadow:1px 2px 2px rgba(0,0,0,.95),0 0 3px rgba(0,0,0,.9),0 1px 4px rgba(0,0,0,.8)">studentvm</div>
<div class="t" style="left:32px;top:1286.5px;font-size:23px;line-height:23px;color:#fff;transform:scaleX(0.9828);text-shadow:1px 2px 2px rgba(0,0,0,.95),0 0 3px rgba(0,0,0,.9),0 1px 4px rgba(0,0,0,.8)">The Elder</div>
<div class="t" style="left:10px;top:1316.5px;font-size:23px;line-height:23px;color:#fff;transform:scaleX(1.0149);text-shadow:1px 2px 2px rgba(0,0,0,.95),0 0 3px rgba(0,0,0,.9),0 1px 4px rgba(0,0,0,.8)">Scrolls Online</div>
<div class="t" style="left:888px;top:291.1px;font-size:27px;line-height:27px;color:#262626;transform:scaleX(1.0818);">Control Panel</div>
<div class="t" style="left:579px;top:358.5px;font-size:23px;line-height:23px;color:#1a1a1a;transform:scaleX(1.0189);">Control Panel</div>
<div class="t" style="left:1440px;top:358.5px;font-size:23px;line-height:23px;color:#7a7a7a;transform:scaleX(1.0063);">Search Control Panel</div>
<div class="t" style="left:427px;top:454.6px;font-size:30px;line-height:30px;color:#1c3a96;transform:scaleX(1.0531);">Adjust your computer's settings</div>
<div class="t" style="left:1444px;top:460.5px;font-size:23px;line-height:23px;color:#56688a;transform:scaleX(1.0056);">View by:</div>
<div class="t" style="left:1559px;top:460.5px;font-size:23px;line-height:23px;color:#3c8fe8;transform:scaleX(1.0179);">Category</div>
<div class="t" style="left:549px;top:555.6px;font-size:30px;line-height:30px;color:#1b7a24;transform:scaleX(1.0214);">System and Security</div>
<div class="t" style="left:549px;top:596.5px;font-size:23px;line-height:23px;color:#0f64c8;transform:scaleX(1.0273);">Review your computer's status</div>
<div class="t" style="left:549px;top:630.5px;font-size:23px;line-height:23px;color:#0f64c8;transform:scaleX(1.0200);">Save backup copies of your files with File</div>
<div class="t" style="left:549px;top:660.5px;font-size:23px;line-height:23px;color:#0f64c8;transform:scaleX(1.0480);">History</div>
<div class="t" style="left:549px;top:694.5px;font-size:23px;line-height:23px;color:#0f64c8;transform:scaleX(1.0323);">Find and fix problems</div>
<div class="t" style="left:549px;top:745.6px;font-size:30px;line-height:30px;color:#1b7a24;transform:scaleX(1.0593);">Network and Internet</div>
<div class="t" style="left:549px;top:786.5px;font-size:23px;line-height:23px;color:#0f64c8;transform:scaleX(1.0131);">View network status and tasks</div>
<div class="t" style="left:549px;top:820.5px;font-size:23px;line-height:23px;color:#0f64c8;transform:scaleX(1.0436);">Choose homegroup and sharing options</div>
<div class="t" style="left:549px;top:871.6px;font-size:30px;line-height:30px;color:#1b7a24;transform:scaleX(1.0299);">Hardware and Sound</div>
<div class="t" style="left:549px;top:912.5px;font-size:23px;line-height:23px;color:#0f64c8;transform:scaleX(1.0127);">View devices and printers</div>
<div class="t" style="left:549px;top:946.5px;font-size:23px;line-height:23px;color:#0f64c8;transform:scaleX(1.0152);">Add a device</div>
<div class="t" style="left:549px;top:980.5px;font-size:23px;line-height:23px;color:#0f64c8;transform:scaleX(1.0638);">Adjust commonly used mobility settings</div>
<div class="t" style="left:549px;top:1039.6px;font-size:30px;line-height:30px;color:#1b7a24;transform:scaleX(1.0304);">Programs</div>
<div class="t" style="left:549px;top:1088.5px;font-size:23px;line-height:23px;color:#0f64c8;transform:scaleX(1.0330);">Uninstall a program</div>
<div class="t" style="left:1189px;top:555.6px;font-size:30px;line-height:30px;color:#1b7a24;transform:scaleX(1.0213);">User Accounts and Family Safety</div>
<div class="t" style="left:1221px;top:596.5px;font-size:23px;line-height:23px;color:#0f64c8;transform:scaleX(1.0350);">Change account type</div>
<div class="t" style="left:1221px;top:632.5px;font-size:23px;line-height:23px;color:#0f64c8;transform:scaleX(1.0077);">Set up Family Safety for any user</div>
<div class="t" style="left:1189px;top:685.6px;font-size:30px;line-height:30px;color:#1b7a24;transform:scaleX(1.0193);">Appearance and Personalization</div>
<div class="t" style="left:1189px;top:726.5px;font-size:23px;line-height:23px;color:#0f64c8;transform:scaleX(1.0304);">Change the theme</div>
<div class="t" style="left:1189px;top:760.5px;font-size:23px;line-height:23px;color:#0f64c8;transform:scaleX(1.0336);">Change desktop background</div>
<div class="t" style="left:1189px;top:794.5px;font-size:23px;line-height:23px;color:#0f64c8;transform:scaleX(1.0266);">Adjust screen resolution</div>
<div class="t" style="left:1189px;top:845.6px;font-size:30px;line-height:30px;color:#1b7a24;transform:scaleX(1.0018);">Clock, Language, and Region</div>
<div class="t" style="left:1189px;top:886.5px;font-size:23px;line-height:23px;color:#0f64c8;transform:scaleX(1.0239);">Add a language</div>
<div class="t" style="left:1189px;top:920.5px;font-size:23px;line-height:23px;color:#0f64c8;transform:scaleX(1.0500);">Change input methods</div>
<div class="t" style="left:1189px;top:954.5px;font-size:23px;line-height:23px;color:#0f64c8;transform:scaleX(1.0421);">Change date, time, or number formats</div>
<div class="t" style="left:1189px;top:1005.6px;font-size:30px;line-height:30px;color:#1b7a24;transform:scaleX(0.9556);">Ease of Access</div>
<div class="t" style="left:1189px;top:1046.5px;font-size:23px;line-height:23px;color:#0f64c8;transform:scaleX(1.0221);">Let Windows suggest settings</div>
<div class="t" style="left:1189px;top:1080.5px;font-size:23px;line-height:23px;color:#0f64c8;transform:scaleX(1.0303);">Optimize visual display</div>
<div id="menu" style="left:1536px;top:496px">
 <div class="abs" style="left:4px;top:4px;width:43px;height:43px;background:#c3def5;border:2px solid #3399ff"></div>
 <div class="abs" style="left:20px;top:19px;width:11px;height:11px;border-radius:50%;background:#1a1a1a"></div>
 <div class="abs" style="left:57px;top:4px;width:2px;height:145px;background:#dcdcdc"></div>
 <div class="abs" style="left:59px;top:53px;width:232px;height:2px;background:#d7d7d7"></div>
</div>
<div class="t" style="left:1607px;top:512.5px;font-size:23px;line-height:23px;color:#111;transform:scaleX(1.0179);">Category</div>
<div class="t" style="left:1607px;top:570.5px;font-size:23px;line-height:23px;color:#111;transform:scaleX(1.0007);">Large icons</div>
<div class="t" style="left:1607px;top:614.5px;font-size:23px;line-height:23px;color:#111;transform:scaleX(1.0118);">Small icons</div>
<div class="t" style="left:1965px;top:1602.5px;font-size:23px;line-height:23px;color:#fff;transform:scaleX(0.9632);">1:57 PM</div>
<div class="t" style="left:1955px;top:1635.5px;font-size:23px;line-height:23px;color:#fff;transform:scaleX(0.9968);">8/17/2014</div>
</body>
</html>
